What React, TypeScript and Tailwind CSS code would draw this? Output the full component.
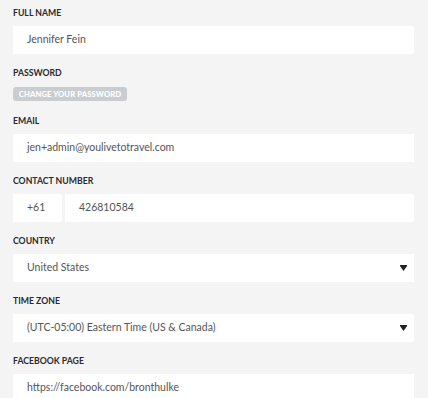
import React from "react";

const Label = ({ children }: { children: React.ReactNode }) => (
  <div className="h-[12px] mb-[7px] text-[8.7px] leading-[12px] font-bold uppercase text-[#2b2b2b]">
    {children}
  </div>
);

const Input = ({ children, className = "" }: { children: React.ReactNode; className?: string }) => (
  <div className={"h-[28px] bg-white flex items-center px-[14px] text-[10.5px] text-[#555] " + className}>
    {children}
  </div>
);

const Arrow = () => (
  <svg width="7" height="6" viewBox="0 0 7 6" className="shrink-0">
    <rect x="0" y="0" width="7" height="1" fill="#222" />
    <polygon points="0,1 7,1 3.5,6" fill="#222" />
  </svg>
);

const Select = ({ children }: { children: React.ReactNode }) => (
  <div className="h-[28px] bg-white flex items-center justify-between pl-[14px] pr-[7px] text-[10.5px] text-[#555]">
    <span>{children}</span>
    <Arrow />
  </div>
);

export default function App() {
  return (
    <div
      className="w-[428px] h-[398px] bg-[#f4f4f4] pl-[13px] pr-[14px] pt-[7px] overflow-hidden"
      style={{ fontFamily: "Lato, 'Open Sans', sans-serif" }}
    >
      <div className="flex flex-col">
        <Label>Full Name</Label>
        <Input>Jennifer Fein</Input>

        <div className="mt-[13px]">
          <Label>Password</Label>
        </div>
        <div className="flex mt-[1px]">
          <button className="h-[14px] w-[114px] rounded-[3px] bg-[#c9cdd1] text-white text-[7.6px] font-black uppercase leading-[14px] tracking-[0.15px]">
            Change your password
          </button>
        </div>

        <div className="mt-[14px]">
          <Label>Email</Label>
        </div>
        <Input>jen+admin@youlivetotravel.com</Input>

        <div className="mt-[13px]">
          <Label>Contact Number</Label>
        </div>
        <div className="flex gap-[3px]">
          <Input className="w-[49px] shrink-0">+61</Input>
          <Input className="flex-1">426810584</Input>
        </div>

        <div className="mt-[13px]">
          <Label>Country</Label>
        </div>
        <Select>United States</Select>

        <div className="mt-[13px]">
          <Label>Time Zone</Label>
        </div>
        <Select>(UTC-05:00) Eastern Time (US &amp; Canada)</Select>

        <div className="mt-[13px]">
          <Label>Facebook Page</Label>
        </div>
        <Input>https://facebook.com/bronthulke</Input>
      </div>
    </div>
  );
}
